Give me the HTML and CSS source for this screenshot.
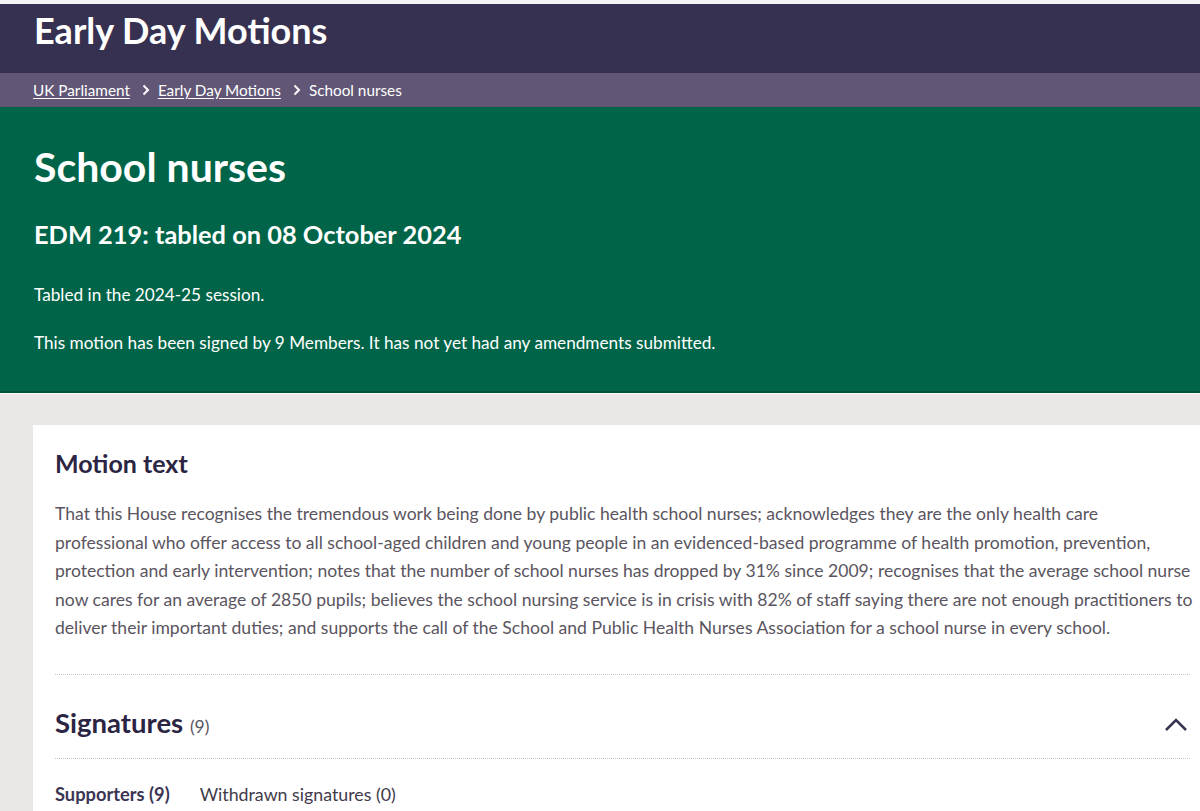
FILE: index.html
```html
<!DOCTYPE html>
<html lang="en">
<head>
<meta charset="utf-8">
<title>School nurses - Early Day Motions</title>
<link rel="stylesheet" href="styles.css">
</head>
<body>
<div class="topstrip"></div>
<header class="site-header">
  <div class="site-title">Early Day Motions</div>
</header>
<nav class="breadcrumb">
  <a href="#">UK Parliament</a>
  <svg class="sep" width="8" height="12" viewBox="0 0 8 12"><path d="M1.5 1.5 L6 6 L1.5 10.5" fill="none" stroke="#fff" stroke-width="2"/></svg>
  <a href="#">Early Day Motions</a>
  <svg class="sep" width="8" height="12" viewBox="0 0 8 12"><path d="M1.5 1.5 L6 6 L1.5 10.5" fill="none" stroke="#fff" stroke-width="2"/></svg>
  <span class="current">School nurses</span>
</nav>
<section class="hero">
  <h1>School nurses</h1>
  <h2>EDM 219: tabled on 08 October 2024</h2>
  <p>Tabled in the 2024-25 session.</p>
  <p>This motion has been signed by 9 Members. It has not yet had any amendments submitted.</p>
</section>
<main class="main">
  <div class="card">
    <h3 class="card-title">Motion text</h3>
    <p class="motion">That this House recognises the tremendous work being done by public health school nurses; acknowledges they are the only health care professional who offer access to all school-aged children and young people in an evidenced-based programme of health promotion, prevention, protection and early intervention; notes that the number of school nurses has dropped by 31% since 2009; recognises that the average school nurse now cares for an average of 2850 pupils; believes the school nursing service is in crisis with 82% of staff saying there are not enough practitioners to deliver their important duties; and supports the call of the School and Public Health Nurses Association for a school nurse in every school.</p>
    <div class="divider"></div>
    <div class="sig-head">
      <h3 class="sig-title">Signatures <span class="count">(9)</span></h3>
      <svg class="chev" width="24" height="14" viewBox="0 0 24 14"><path d="M2 12 L12 2 L22 12" fill="none" stroke="#3b3553" stroke-width="2.6"/></svg>
    </div>
    <div class="divider"></div>
    <div class="tabs">
      <span class="tab active">Supporters (9)</span>
      <span class="tab">Withdrawn signatures (0)</span>
    </div>
  </div>
</main>
</body>
</html>
```
FILE: styles.css
```css
html, body { margin: 0; padding: 0; }
body {
  font-family: Lato, "Open Sans", sans-serif;
  background: #e9e8e6;
  width: 1200px;
  overflow: hidden;
  height: 811px;
}
.topstrip { height: 4px; background: #f4f3f5; }
.site-header {
  background: #373151;
  height: 69px;
  padding-left: 34px;
  box-sizing: border-box;
}
.site-title {
  color: #fff;
  font-weight: 700;
  font-size: 36px;
  line-height: 52px;
}
.breadcrumb {
  background: #615675;
  height: 34px;
  padding-left: 33px;
  display: flex;
  align-items: center;
  font-size: 15.3px;
  color: #fff;
}
.breadcrumb a { color: #fff; text-decoration: underline; text-underline-offset: 2px; }
.breadcrumb .sep { margin: 0 8px 0 12px; }
.hero {
  background: #006548;
  color: #fff;
  padding: 34px 34px 0;
  height: 286px;
  box-sizing: border-box;
  border-bottom: 2px solid #005238;
  box-shadow: 0 1px 0 #fbfbfb;
}
.hero h1 { margin: 0; font-size: 41px; font-weight: 700; line-height: 52px; }
.hero h2 { margin: 25px 0 0; font-size: 25.4px; font-weight: 700; line-height: 32px; }
.hero p { margin: 0; font-size: 17.2px; line-height: 22px; }
.hero h2 + p { margin-top: 34px; }
.hero p + p { margin-top: 26px; }
.main { padding: 32px 0 0 33px; }
.card {
  background: #fff;
  padding: 22px 0 0 22px;
  min-height: 400px;
}
.card-title {
  margin: 0;
  font-size: 25px;
  font-weight: 700;
  color: #2b2543;
  line-height: 32px;
}
.motion {
  margin: 21px 5.5px 0 0;
  font-size: 17.57px;
  line-height: 28.6px;
  color: #5a5560;
}
.divider { border-top: 1px dotted #c8c8c8; margin: 31px 10px 0 0; }
.sig-head {
  display: flex;
  justify-content: space-between;
  align-items: center;
  padding: 32px 12px 15px 0;
}
.sig-title { margin: 0; font-size: 27.5px; font-weight: 700; color: #2b2543; line-height: 32px; }
.sig-title .count { font-size: 17.5px; font-weight: 400; color: #58545f; }
.sig-head + .divider { margin-top: 0; }
.tabs { display: flex; gap: 30px; padding-top: 24px; font-size: 17.8px; color: #3f3b4a; }
.tab.active { font-weight: 700; color: #3b3553; font-size: 18.3px; }
```
